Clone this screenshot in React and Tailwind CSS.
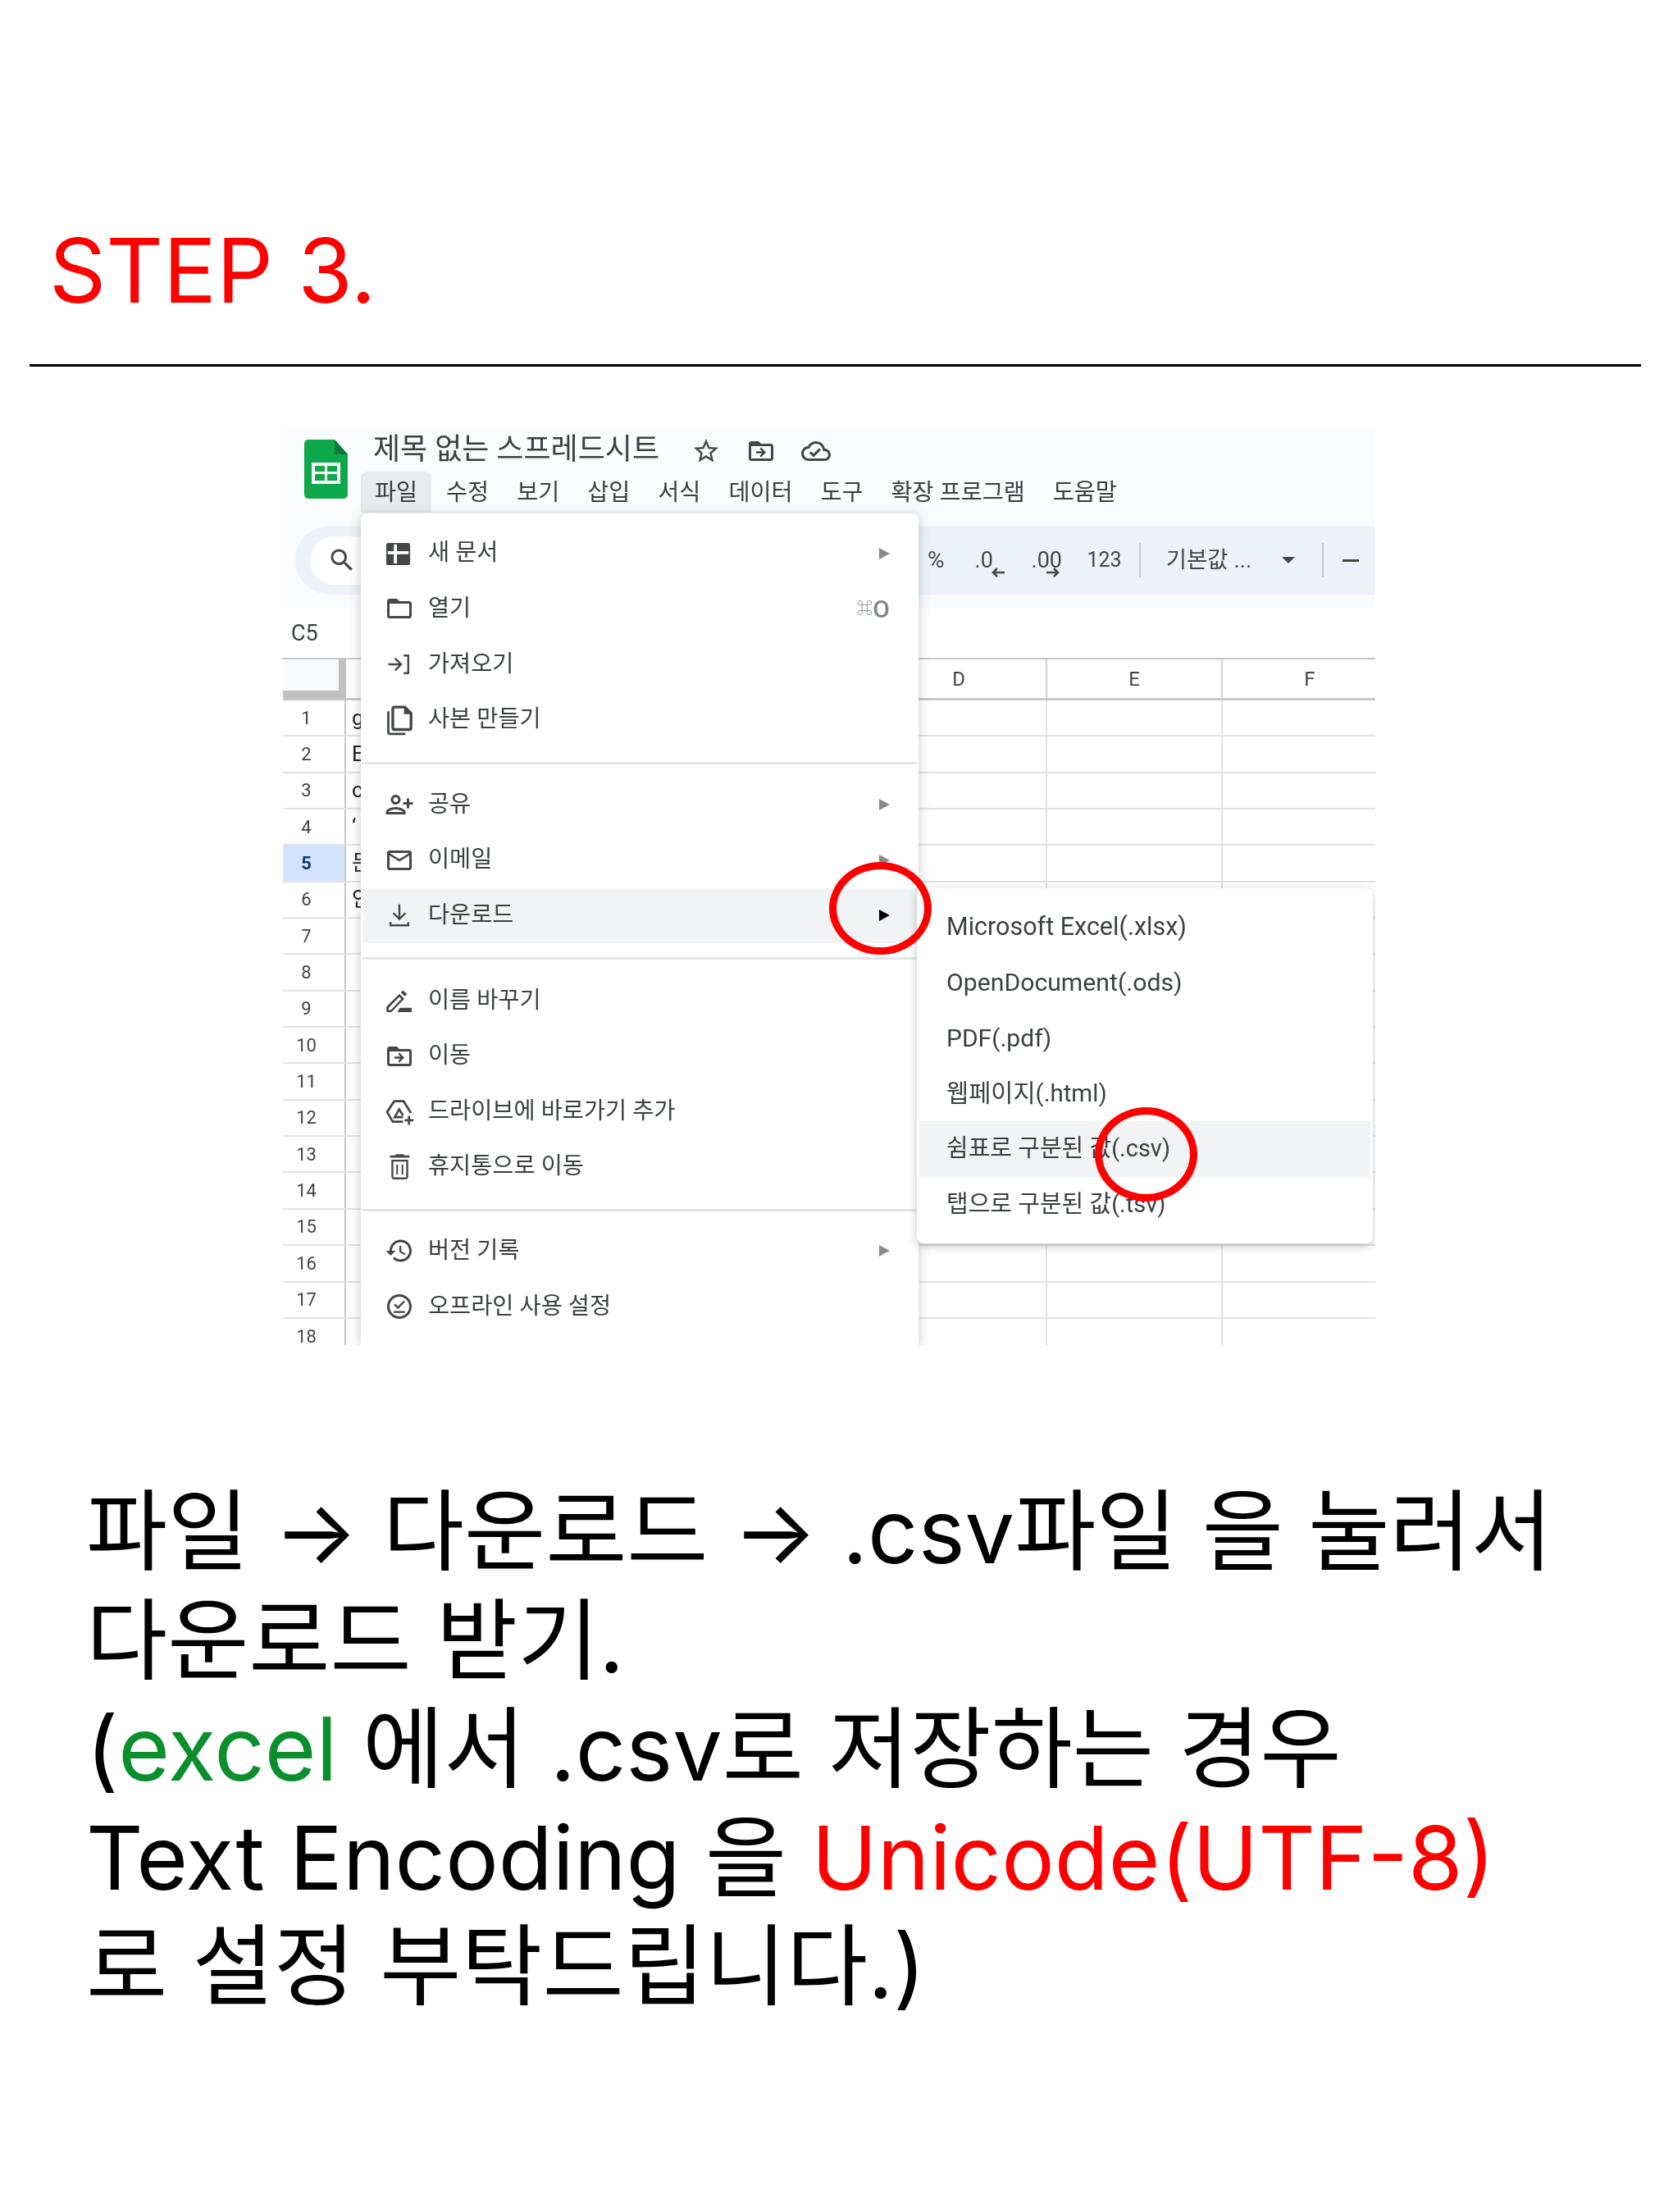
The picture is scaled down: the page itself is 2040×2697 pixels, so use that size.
const sansKr = "font-['Roboto','Noto_Sans_CJK_KR',sans-serif]"

const rows = Array.from({ length: 18 }, (_, i) => i + 1)
const cellText = { 1: 'g', 2: 'E', 3: 'c', 4: '‘', 5: '든', 6: '안' }

function MaterialIcon({ d, className = 'size-9' }) {
  return (
    <svg viewBox="0 0 24 24" className={`${className} fill-[#444746]`}>
      <path d={d} fillRule="evenodd" />
    </svg>
  )
}

const icons = {
  star: 'M22 9.24l-7.19-.62L12 2 9.19 8.63 2 9.24l5.46 4.73L5.82 21 12 17.27 18.18 21l-1.63-7.03L22 9.24zM12 15.4l-3.76 2.27 1-4.28-3.32-2.88 4.38-.38L12 6.1l1.71 4.04 4.38.38-3.32 2.88 1 4.28L12 15.4z',
  move: 'M20 6h-8l-2-2H4c-1.1 0-2 .9-2 2v12c0 1.1.9 2 2 2h16c1.1 0 2-.9 2-2V8c0-1.1-.9-2-2-2zm0 12H4V8h16v10zm-8-1l4-4-4-4-1.1 1.1 2.1 2.1H8v1.6h5l-2.1 2.1L12 17z',
  cloud: 'M19.35 10.04C18.67 6.59 15.64 4 12 4 9.11 4 6.6 5.64 5.35 8.04 2.34 8.36 0 10.91 0 14c0 3.31 2.69 6 6 6h13c2.76 0 5-2.24 5-5 0-2.64-2.05-4.78-4.65-4.96zM19 18H6c-2.21 0-4-1.79-4-4 0-2.05 1.53-3.76 3.56-3.97l1.07-.11.5-.95C8.08 7.14 9.94 6 12 6c2.62 0 4.88 1.86 5.39 4.43l.3 1.5 1.53.11c1.56.1 2.78 1.41 2.78 2.96 0 1.65-1.35 3-3 3zm-9-3.82l-2.09-2.09L6.5 13.5 10 17l6.01-6.01-1.41-1.41z',
  search: 'M15.5 14h-.79l-.28-.27C15.41 12.59 16 11.11 16 9.5 16 5.91 13.09 3 9.5 3S3 5.91 3 9.5 5.91 16 9.5 16c1.61 0 3.09-.59 4.23-1.57l.27.28v.79l5 4.99L20.49 19l-4.99-5zm-6 0C7.01 14 5 11.99 5 9.5S7.01 5 9.5 5 14 7.01 14 9.5 11.99 14 9.5 14z',
  newDoc: 'M3 3.3h16a1.7 1.7 0 0 1 1.7 1.7v14.6a1.7 1.7 0 0 1-1.7 1.7H3a1.7 1.7 0 0 1-1.7-1.7V5A1.7 1.7 0 0 1 3 3.3zM7.5 4.5h2.5V10h9.5v2.5H10V20H7.5v-7.5h-5V10h5z',
  folder: 'M20 6h-8l-2-2H4c-1.1 0-1.99.9-1.99 2L2 18c0 1.1.9 2 2 2h16c1.1 0 2-.9 2-2V8c0-1.1-.9-2-2-2zm0 12H4V8h16v10z',
  importFile: 'M15.5 4H20v16h-4.5v-1.6h2.9V5.6h-2.9V4zM9 6.5L7.9 7.6l3.6 3.6H3v1.6h8.5l-3.6 3.6L9 17.5l5.5-5.5L9 6.5z',
  copy: 'M8 2h8l5 5v11c0 1.1-.9 2-2 2H8c-1.1 0-2-.9-2-2V4c0-1.1.9-2 2-2zm0 2v14h11V8h-4V4H8zM3 6h1.6v15.4H16V23H5c-1.1 0-2-.9-2-2V6z',
  share: 'M15 12c2.21 0 4-1.79 4-4s-1.79-4-4-4-4 1.79-4 4 1.79 4 4 4zm0-6c1.1 0 2 .9 2 2s-.9 2-2 2-2-.9-2-2 .9-2 2-2zm0 8c-2.67 0-8 1.34-8 4v2h16v-2c0-2.66-5.33-4-8-4zm-6 4c.22-.72 3.31-2 6-2 2.7 0 5.8 1.29 6 2H9zm-3-3v-3h3v-2H6V7H4v3H1v2h3v3h2z',
  mail: 'M22 6c0-1.1-.9-2-2-2H4c-1.1 0-2 .9-2 2v12c0 1.1.9 2 2 2h16c1.1 0 2-.9 2-2V6zm-2 0l-8 5-8-5h16zm0 12H4V8l8 5 8-5v10z',
  download: 'M11.2 3h1.6v10.2l3.6-3.6 1.1 1.1-5.5 5.5-5.5-5.5 1.1-1.1 3.6 3.6V3zM4 17.5h1.6v1.9h12.8v-1.9H20V21H4v-3.5z',
  rename: 'M1.5 21.3V17L12 6.5l4 4L5.5 21.3zM3.3 19.6H5l8.6-9-1.6-1.6-8.7 8.8zM13.2 5.3L15 3.6l3.2 3.2-1.8 1.7zM10.5 21.3l1.8-3.5H22v3.5z',
  trash: 'M6 19c0 1.1.9 2 2 2h8c1.1 0 2-.9 2-2V7H6v12zM7.4 8.4h9.2v11.2H7.4V8.4zM9.5 10.5h1.2v7H9.5zm3.8 0h1.2v7h-1.2zM15.5 4l-1-1h-5l-1 1H5v1.6h14V4z',
  history: 'M13 3c-4.97 0-9 4.03-9 9H1l3.89 3.89.07.14L9 12H6c0-3.87 3.13-7 7-7s7 3.13 7 7-3.13 7-7 7c-1.93 0-3.68-.79-4.94-2.06l-1.42 1.42C8.27 19.99 10.51 21 13 21c4.97 0 9-4.03 9-9s-4.03-9-9-9zm-1 5v5l4.28 2.54.72-1.21-3.5-2.08V8H12z',
  offline: 'M12 2C6.48 2 2 6.48 2 12s4.48 10 10 10 10-4.48 10-10S17.52 2 12 2zm0 18c-4.41 0-8-3.59-8-8s3.59-8 8-8 8 3.59 8 8-3.59 8-8 8zm-4.6-9.3l1.1-1.1 2.3 2.3 4.7-4.7 1.1 1.1-5.8 5.8-3.4-3.4zM7.5 15.6h9v1.6h-9z',
}

// drive shortcut is easier as strokes than as a filled outline
function ShortcutIcon() {
  return (
    <svg viewBox="0 0 24 24" className="size-9 fill-none stroke-[#444746] stroke-[1.8]">
      <path d="M15 20.4H6.7L2 12.6 7.8 3.8h7.6l6 9.5" />
      <path d="M15 16.8H8.2l3.6-6.4 3.2 5" />
      <path d="M19.8 15.6V23M16.2 19.3h7.2" />
    </svg>
  )
}

function Arrow({ dark }) {
  return (
    <span
      className={`h-0 w-0 border-y-[7px] border-l-[13px] border-y-transparent ${dark ? 'border-l-black' : 'border-l-[#8a8a8a]'}`}
    />
  )
}

function MenuRow({ icon, custom, large, flip, label, arrow, shortcut, active }) {
  return (
    <div className={`mx-[2px] flex h-[67.6px] items-center pr-[33px] pl-[27px] ${active ? 'bg-[#f1f3f4]' : ''}`}>
      <span className={`flex size-9 items-center justify-center ${flip ? '-scale-x-100' : ''}`}>
        {custom || <MaterialIcon d={icon} className={large ? 'size-[41px] shrink-0' : 'size-9 shrink-0'} />}
      </span>
      <span className="ml-[17px] flex-1 text-[28.4px] text-[#3c4043]">{label}</span>
      {arrow && <Arrow dark={active} />}
      {shortcut && (
        <span className="flex items-center font-medium text-[#80868b]">
          <span className="text-[20px]">⌘</span>
          <span className="text-[30px]">{shortcut}</span>
        </span>
      )}
    </div>
  )
}

function Sep({ className }) {
  return <div className={`${className} mx-[2px] h-[3px] bg-[#e4e6e8]`} />
}

function FileMenu() {
  return (
    <div className="absolute top-[101px] bottom-0 left-[95px] w-[680px] rounded-t-lg bg-white pt-[15px] shadow-[0_2px_14px_rgba(60,64,67,0.28)]">
      <MenuRow icon={icons.newDoc} label="새 문서" arrow />
      <MenuRow icon={icons.folder} label="열기" shortcut="O" />
      <MenuRow icon={icons.importFile} label="가져오기" />
      <MenuRow icon={icons.copy} large label="사본 만들기" />
      <Sep className="mt-[18px] mb-[15px]" />
      <MenuRow icon={icons.share} flip label="공유" arrow />
      <MenuRow icon={icons.mail} label="이메일" arrow />
      <MenuRow icon={icons.download} label="다운로드" arrow active />
      <Sep className="mt-[17px] mb-[16px]" />
      <MenuRow icon={icons.rename} label="이름 바꾸기" />
      <MenuRow icon={icons.move} label="이동" />
      <MenuRow custom={<ShortcutIcon />} label="드라이브에 바로가기 추가" />
      <MenuRow icon={icons.trash} large label="휴지통으로 이동" />
      <Sep className="mt-[17px] mb-[15px]" />
      <MenuRow icon={icons.history} label="버전 기록" arrow />
      <MenuRow icon={icons.offline} label="오프라인 사용 설정" />
    </div>
  )
}

function DownloadMenu() {
  const items = [
    ['Microsoft Excel(.xlsx)', 'text-[30.5px]'],
    ['OpenDocument(.ods)', 'text-[30.2px]'],
    ['PDF(.pdf)', 'text-[30px]'],
    ['웹페이지(.html)', 'text-[29.5px]'],
    ['쉼표로 구분된 값(.csv)', 'text-[29px] bg-[#f1f3f4]'],
    ['탭으로 구분된 값(.tsv)', 'text-[29px]'],
  ]
  return (
    <div className="absolute top-[558px] left-[773px] w-[556px] rounded-lg bg-white py-[13px] shadow-[0_3px_12px_rgba(60,64,67,0.3)]">
      {items.map(([item, style]) => (
        <div key={item} className={`mx-[3px] flex h-[67.8px] items-center pl-[33px] text-[#3c4043] ${style}`}>
          {item}
        </div>
      ))}
    </div>
  )
}

function SheetsLogo() {
  return (
    <svg viewBox="0 0 53 72" className="h-[72px] w-[53px]">
      <path d="M5 0h32l16 18v49a5 5 0 0 1-5 5H5a5 5 0 0 1-5-5V5a5 5 0 0 1 5-5z" fill="#0da84a" />
      <path d="M37 0l16 18H37z" fill="#0a7a38" />
      <path d="M9 28h35v26H9zm4 4v7h12v-7zm15 0v7h12v-7zM13 42v8h12v-8zm15 0v8h12v-8z" fill="#fff" fillRule="evenodd" />
    </svg>
  )
}

function SmallArrow({ left }) {
  return (
    <svg viewBox="0 0 16 12" className={`absolute top-[22px] h-[12px] w-[16px] fill-none stroke-[#444746] stroke-[2.6] ${left ? 'left-[20px]' : 'left-[18px]'}`}>
      {left ? <path d="M16 6H2M7 1L2 6l5 5" /> : <path d="M0 6h14M9 1l5 5-5 5" />}
    </svg>
  )
}

function ToolbarRight() {
  return (
    <div className="absolute top-[116px] left-[786px] flex h-[84px] items-center text-[#444746]">
      <span className="text-[28px]">%</span>
      <span className="relative ml-[37px] w-[36px] text-[27px] leading-none">
        .0
        <SmallArrow left />
      </span>
      <span className="relative ml-[33px] w-[36px] text-[27px] leading-none">
        .00
        <SmallArrow />
      </span>
      <span className="ml-[32px] text-[25px]">123</span>
      <span className="ml-[21px] h-[42px] w-[2px] bg-[#c7c7c7]" />
      <span className="ml-[31px] text-[27.5px]">기본값 ...</span>
      <span className="ml-[37px] h-0 w-0 border-x-[8px] border-t-[8px] border-x-transparent border-t-[#444746]" />
      <span className="ml-[33px] h-[42px] w-[2px] bg-[#c7c7c7]" />
      <span className="ml-[23px] h-[3px] w-[20px] bg-[#444746]" />
    </div>
  )
}

function SheetGrid() {
  return (
    <div>
      <div className="flex h-[52px] border-t-2 border-b-[3px] border-[#c8c8c8]">
        <div className="w-[77px] shrink-0 border-r-[9px] border-b-[9px] border-[#c0c0c0] bg-[#f8f9fa]" />
        {['', '', '', 'D', 'E', 'F'].map((col, i) => (
          <div key={i} className={`flex shrink-0 items-center justify-center border-r-2 border-[#d0d0d0] text-[24px] text-[#444] ${i === 0 ? 'w-[213px]' : 'w-[214px]'}`}>
            {col}
          </div>
        ))}
      </div>
      {rows.map((row) => (
        <div key={row} className="flex h-[44.35px] border-b-2 border-[#e2e2e2]">
          <div className={`flex w-[77px] shrink-0 items-center justify-center border-r-2 border-[#c8c8c8] pr-[18px] text-[22px] ${row === 5 ? 'bg-[#d3e3fd] font-bold text-[#0b3b74]' : 'text-[#444]'}`}>
            {row}
          </div>
          <div className="flex w-[213px] shrink-0 items-center border-r-2 border-[#e2e2e2] pl-[7px] text-[26px] text-[#222]">{cellText[row]}</div>
          <div className="w-[214px] shrink-0 border-r-2 border-[#e2e2e2]" />
          <div className="w-[214px] shrink-0 border-r-2 border-[#e2e2e2]" />
          <div className="w-[214px] shrink-0 border-r-2 border-[#e2e2e2]" />
          <div className="w-[214px] shrink-0 border-r-2 border-[#e2e2e2]" />
          <div className="w-[214px] shrink-0 border-r-2 border-[#e2e2e2]" />
        </div>
      ))}
    </div>
  )
}

function SheetScreenshot() {
  const menus = ['수정', '보기', '삽입', '서식', '데이터', '도구', '확장 프로그램', '도움말']
  return (
    <div className={`relative ml-[345px] h-[1115px] w-[1332px] overflow-hidden bg-white blur-[0.5px] ${sansKr}`}>
      <div className="h-[217px] bg-[#f9fbfd]">
        <div className="flex">
          <div className="mt-[11px] ml-[26px]">
            <SheetsLogo />
          </div>
          <div className="ml-[31px]">
            <div className="flex h-[50px] items-center">
              <span className="mb-1 text-[36px] text-[#3c4043]">제목 없는 스프레드시트</span>
              <span className="ml-[39px] flex gap-[31px]">
                <MaterialIcon d={icons.star} />
                <MaterialIcon d={icons.move} />
                <MaterialIcon d={icons.cloud} />
              </span>
            </div>
            <div className="-ml-[15px] flex h-[50px] items-center text-[28.3px] text-[#3c4043]">
              <span className="mr-px flex h-full items-center rounded-t-lg bg-[#e8eaed] px-[17px] pt-[2px]">파일</span>
              {menus.map((menu) => (
                <span key={menu} className="mt-[2px] px-[17px]">{menu}</span>
              ))}
            </div>
          </div>
        </div>
        <div className="mt-[16px] ml-[15px] flex h-[84px] items-center rounded-l-[42px] bg-[#edf2fa] pl-[18px]">
          <div className="flex h-[59px] w-[120px] items-center rounded-l-[30px] bg-white pl-[21px]">
            <MaterialIcon d={icons.search} />
          </div>
        </div>
      </div>
      <div className="flex h-[60px] items-center pl-[10px] text-[27px] text-[#3c4043]">C5</div>
      <SheetGrid />
      <ToolbarRight />
      <FileMenu />
      <DownloadMenu />
      <div className="absolute top-[526px] left-[666px] h-[113px] w-[125px] rounded-[50%] border-[9px] border-[#ff0000]" />
      <div className="absolute top-[825px] left-[990px] h-[115px] w-[125px] rounded-[50%] border-[9px] border-[#ff0000]" />
    </div>
  )
}

export default function App() {
  return (
    <div className="min-h-[2697px] bg-white font-['Inter','Noto_Sans_CJK_KR',sans-serif] text-black">
      <h1 className="pt-[264px] pl-[60px] text-[108px] leading-[131px] text-[#ff0000]">STEP 3.</h1>
      <div className="mt-[49px] ml-[36px] h-[3px] w-[1965px] bg-black" />
      <div className="mt-[78px]">
        <SheetScreenshot />
      </div>
      <p className="mt-[161px] pl-[105px] text-[107.8px] leading-[132.5px]">
        파일 → 다운로드 → .csv파일 을 눌러서
        <br />
        다운로드 받기.
        <br />
        (<span className="text-[#0b8f2d]">excel</span> 에서 .csv로 저장하는 경우
        <br />
        Text Encoding 을 <span className="text-[#ff0000]">Unicode(UTF-8)</span>
        <br />
        로 설정 부탁드립니다.)
      </p>
    </div>
  )
}
